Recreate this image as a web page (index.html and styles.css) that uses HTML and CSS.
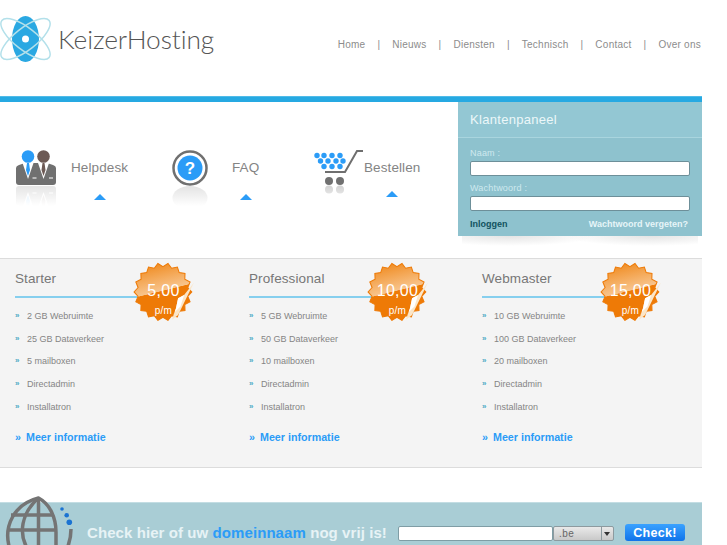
FILE: index.html
```html
<!DOCTYPE html>
<html lang="nl">
<head>
<meta charset="utf-8">
<title>KeizerHosting</title>
<link rel="stylesheet" href="styles.css">
</head>
<body>
<svg class="defs" width="0" height="0" aria-hidden="true">
  <defs>
    <linearGradient id="shine" x1="0.35" y1="0" x2="0.6" y2="1">
      <stop offset="0" stop-color="#f08c22"/>
      <stop offset="0.48" stop-color="#f8c48c"/>
      <stop offset="0.49" stop-color="#ee7a06"/>
      <stop offset="1" stop-color="#ee7a06"/>
    </linearGradient>
    <linearGradient id="fade" x1="0" y1="0" x2="0" y2="1">
      <stop offset="0" stop-color="#fff" stop-opacity="0.2"/>
      <stop offset="1" stop-color="#fff" stop-opacity="1"/>
    </linearGradient>
    <symbol id="burst" viewBox="0 0 64 64">
      <polygon fill="url(#shine)" stroke="#ee7a06" stroke-width="1" points="58,30 54.1,34.3 56.3,39.6 51.2,42.25 51.4,48 45.75,48.8 44,54.2 38.4,53 34.9,57.6 30,54.5 25.1,57.6 21.6,53 16,54.2 14.25,48.8 8.6,48 8.8,42.25 3.7,39.6 5.9,34.3 2,30 5.9,25.7 3.7,20.4 8.8,17.75 8.6,12 14.25,11.2 16,5.8 21.6,7 25.1,2.4 30,5.5 34.9,2.4 38.4,7 44,5.8 45.75,11.2 51.4,12 51.2,17.75 56.3,20.4 54.1,25.7"/>
      <polygon fill="#fbe6c8" points="60,21 44.7,52.4 38.8,57 42.7,45.6 44.7,36 50.5,33"/>
      <polygon fill="#fff" points="50.500,33 44.7,36 42.7,45.6 38.8,57 41,50 47,44"/>
    </symbol>
    <g id="suits">
      <path d="M0 18 q0-2 3-3 l6-2 h22 l6 2 q3 1 3 3 v14 q0 3-3 3 h-34 q-3 0-3-3z" fill="#707070"/>
      <path d="M6.500 13 l5.500 16 l5.500-16z" fill="#fff"/>
      <path d="M22 13 l5.500 16 l5.500-16z" fill="#fff"/>
      <path d="M11 13 h2 l1 7 l-2 6 l-2-6z" fill="#2b9cf7"/>
      <path d="M26.500 13 h2 l1 7 l-2 6 l-2-6z" fill="#6d5a55"/>
      <circle cx="12" cy="6.500" r="6.300" fill="#2b9cf7"/>
      <circle cx="27.500" cy="6.500" r="6.300" fill="#6d5a55"/>
      <rect x="16.500" y="27.500" width="4" height="1" fill="#fff"/>
      <rect x="33" y="27.500" width="4" height="1" fill="#fff"/>
    </g>
  </defs>
</svg>
<div class="page">
  <header class="header">
    <a class="logo" href="#">
      <svg class="logo-mark" width="52" height="62" viewBox="0 0 52 62">
        <ellipse cx="25.500" cy="23" rx="13.500" ry="23" fill="#2aa8e2"/>
        <ellipse cx="25.500" cy="23" rx="30" ry="11" fill="none" stroke="#b3e0ea" stroke-width="1.500" transform="rotate(38 25.500 23)"/>
        <ellipse cx="25.500" cy="23" rx="30" ry="11" fill="none" stroke="#b3e0ea" stroke-width="1.500" transform="rotate(-38 25.500 23)"/>
        <circle cx="25.500" cy="23" r="3.500" fill="#fff"/>
      </svg>
      <span class="logo-text">KeizerHosting</span>
    </a>
    <nav class="nav">
      <a href="#">Home</a><span>|</span><a href="#">Nieuws</a><span>|</span><a href="#">Diensten</a><span>|</span><a href="#">Technisch</a><span>|</span><a href="#">Contact</a><span>|</span><a href="#">Over ons</a>
    </nav>
  </header>
  <div class="bar"></div>
  <section class="mid">
    <div class="links">
      <a class="link link-help" href="#">
        <svg class="icon" width="42" height="56" viewBox="0 0 42 56">
          <use href="#suits"/>
          <use href="#suits" transform="translate(0 71) scale(1 -1)" opacity="0.22"/>
          <rect x="0" y="36" width="42" height="20" fill="url(#fade)"/>
        </svg>
        <span class="link-col"><span class="link-label">Helpdesk</span><span class="arrow"></span></span>
      </a>
      <a class="link link-faq" href="#">
        <svg class="icon" width="36" height="56" viewBox="0 0 36 56">
          <circle cx="18" cy="18" r="16.500" fill="#fff" stroke="#707070" stroke-width="2.500"/>
          <circle cx="18" cy="18" r="12.500" fill="#2b9cf7"/>
          <text x="18" y="23.500" class="qmark">?</text>
          <ellipse cx="18" cy="48" rx="17.500" ry="12" fill="#dcdcdc"/>
          <rect x="0" y="36" width="36" height="20" fill="url(#fade)"/>
        </svg>
        <span class="link-col"><span class="link-label">FAQ</span><span class="arrow"></span></span>
      </a>
      <a class="link link-cart" href="#">
        <svg class="icon" width="50" height="56" viewBox="0 0 50 56" fill="#2b9cf7">
          <circle cx="3" cy="5.500" r="2.700"/><circle cx="10" cy="5.500" r="2.700"/><circle cx="18" cy="5.500" r="2.700"/><circle cx="26" cy="5.500" r="2.700"/>
          <circle cx="6.500" cy="11" r="2.700"/><circle cx="14" cy="11" r="2.700"/><circle cx="22" cy="11" r="2.700"/><circle cx="29" cy="11" r="2.700"/>
          <circle cx="10" cy="16.500" r="2.700"/><circle cx="18" cy="16.500" r="2.700"/><circle cx="26" cy="16.500" r="2.700"/>
          <path d="M11 22 h20 l12-21 h6" fill="none" stroke="#6f6f6f" stroke-width="2"/>
          <circle cx="15" cy="31" r="4" fill="#707070"/><circle cx="26" cy="31" r="4" fill="#707070"/>
          <circle cx="15" cy="39.500" r="4" fill="#c8c8c8"/><circle cx="26" cy="39.500" r="4" fill="#c8c8c8"/>
          <rect x="0" y="36" width="50" height="20" fill="url(#fade)"/>
        </svg>
        <span class="link-col"><span class="link-label">Bestellen</span><span class="arrow"></span></span>
      </a>
    </div>
    <form class="panel">
      <h2 class="panel-title">Klantenpaneel</h2>
      <div class="panel-body">
        <label class="field-label" for="naam">Naam :</label>
        <input class="field" id="naam" type="text">
        <label class="field-label" for="pass">Wachtwoord :</label>
        <input class="field" id="pass" type="password">
        <div class="panel-links">
          <a class="login" href="#">Inloggen</a>
          <a class="forgot" href="#">Wachtwoord vergeten?</a>
        </div>
      </div>
    </form>
  </section>
  <section class="plans">
    <article class="plan">
      <h3 class="plan-title">Starter</h3>
      <div class="badge"><svg width="66" height="66"><use href="#burst"/></svg><span class="price">5,00</span><span class="pm">p/m</span></div>
      <ul class="features"><li>2 GB Webruimte</li><li>25 GB Dataverkeer</li><li>5 mailboxen</li><li>Directadmin</li><li>Installatron</li></ul>
      <a class="more" href="#">Meer informatie</a>
    </article>
    <article class="plan">
      <h3 class="plan-title">Professional</h3>
      <div class="badge"><svg width="66" height="66"><use href="#burst"/></svg><span class="price">10,00</span><span class="pm">p/m</span></div>
      <ul class="features"><li>5 GB Webruimte</li><li>50 GB Dataverkeer</li><li>10 mailboxen</li><li>Directadmin</li><li>Installatron</li></ul>
      <a class="more" href="#">Meer informatie</a>
    </article>
    <article class="plan">
      <h3 class="plan-title">Webmaster</h3>
      <div class="badge"><svg width="66" height="66"><use href="#burst"/></svg><span class="price">15,00</span><span class="pm">p/m</span></div>
      <ul class="features"><li>10 GB Webruimte</li><li>100 GB Dataverkeer</li><li>20 mailboxen</li><li>Directadmin</li><li>Installatron</li></ul>
      <a class="more" href="#">Meer informatie</a>
    </article>
  </section>
  <footer class="domain">
    <svg class="globe" width="76" height="50" viewBox="0 0 76 50">
      <g fill="none" stroke="#747474" stroke-width="3.500">
        <path d="M9 50 C4 30 14 8 38.500 2 C50 8 56 22 56 36 V50"/>
        <path d="M38.500 2 C20 18 20 38 26 50"/>
        <path d="M38.500 2v48M11 19h41M7 34h49"/>
        <path d="M71 33 Q71 42 68 50"/>
      </g>
      <circle cx="62" cy="13" r="1.800" fill="#1a73d2"/><circle cx="66.700" cy="19.300" r="2.300" fill="#1a73d2"/><circle cx="69.300" cy="26.300" r="2.800" fill="#1a73d2"/>
    </svg>
    <p class="domain-text">Check hier of uw <em>domeinnaam</em> nog vrij is!</p>
    <input class="domain-input" type="text">
    <span class="tld"><span class="tld-name">.be</span><span class="tld-btn"></span></span>
    <button class="check" type="button">Check!</button>
  </footer>
</div>
</body>
</html>
```
FILE: styles.css
```css
* { box-sizing: border-box; }
html, body { margin: 0; padding: 0; background: #fff; height: 545px; overflow: hidden; }
body { font-family: "Liberation Sans", Arial, sans-serif; color: #777; }
a { text-decoration: none; color: inherit; }
.defs { position: absolute; }
.page { width: 702px; }

.header { height: 96px; display: flex; align-items: flex-start; justify-content: space-between; }
.logo { display: flex; align-items: flex-start; margin-top: 16px; }
.logo-mark { flex: none; }
.logo-text { font-family: Lato, sans-serif; font-weight: 300; font-size: 26.300px; line-height: 30px; color: #555; margin: 8px 0 0 6px; letter-spacing: -0.100px; }
.nav { display: flex; gap: 12px; margin: 39px 1px 0 0; font-size: 10px; line-height: 12px; letter-spacing: 0.250px; color: #8c8c8c; }

.bar { height: 6px; background: #26a9e2; border-top: 1px solid #50bbe8; }

.mid { height: 156px; display: flex; justify-content: space-between; align-items: flex-start; }
.links { display: flex; padding: 48px 0 0 16px; }
.link { display: flex; align-items: flex-start; }
.link-help { width: 156px; }
.link-faq { width: 142px; }
.icon { flex: none; }
.link-col { display: flex; flex-direction: column; align-items: center; }
.link-label { font-size: 13.500px; line-height: 16px; letter-spacing: 0.100px; color: #848484; margin-top: 10px; }
.arrow { width: 0; height: 0; margin-top: 18px; border-left: 6px solid transparent; border-right: 6px solid transparent; border-bottom: 6px solid #2b9cf7; }
.link-help .link-col { margin-left: 13px; }
.link-faq .link-col { margin-left: 24px; }
.link-cart .link-col { margin-left: 0; }
.link-cart .arrow { margin-top: 15px; }
.qmark { font-size: 17px; font-weight: 700; fill: #fff; text-anchor: middle; }

.panel { position: relative; width: 244px; height: 134px; background: #8ec2ce; color: #fff; }
.panel::after { content: ""; position: absolute; left: 4px; right: 4px; top: 100%; height: 10px; background: radial-gradient(ellipse 36% 100% at 20% 0, #e4e4e4, transparent), radial-gradient(ellipse 36% 100% at 80% 0, #e4e4e4, transparent); }
.panel-title { margin: 0; height: 36px; padding: 10px 12px 0; font-size: 13px; line-height: 16px; font-weight: 400; letter-spacing: 0.300px; color: #ecf7f9; background: #93c7d3; border-bottom: 1px solid #a9d5de; }
.panel-body { padding: 9px 12px 0; display: flex; flex-direction: column; }
.field-label { font-size: 9px; line-height: 12px; letter-spacing: 0.200px; color: #cfe9ee; }
.field { display: block; width: 220px; height: 15px; margin: 2px 0 6px; padding: 0; background: #fff; border: 1px solid #6d8f99; border-radius: 2px; }
.panel-links { display: flex; justify-content: space-between; font-size: 9px; line-height: 12px; font-weight: 700; margin-top: 1px; padding-right: 2px; }
.login { color: #11525f; }
.forgot { color: #e6f5f8; }

.plans { height: 210px; display: grid; grid-template-columns: 234px 233px 1fr; background: #f4f4f4; border-top: 1px solid #dcdcdc; border-bottom: 1px solid #dcdcdc; padding-left: 15px; }
.plan { position: relative; }
.plan-title { margin: 12px 0 0; width: 125px; height: 27px; font-size: 13.500px; line-height: 16px; font-weight: 400; letter-spacing: 0.100px; color: #777; border-bottom: 2px solid #86cfee; }
.badge { position: absolute; left: 117px; top: 2px; width: 66px; height: 66px; color: #fff; text-align: center; }
.badge svg { display: block; }
.price { position: absolute; left: 0; width: 63px; top: 21px; font-size: 16px; line-height: 18px; letter-spacing: 0.300px; }
.pm { position: absolute; left: 0; width: 63px; top: 44px; font-size: 10px; line-height: 12px; letter-spacing: 0.200px; }
.features { list-style: none; margin: 7px 0 0; padding: 0; font-size: 9px; line-height: 22.700px; color: #858585; }
.features li { padding-left: 12px; position: relative; }
.features li::before { content: "»"; position: absolute; left: 0; font-size: 8px; color: #4aa9c4; font-weight: 700; }
.more { display: block; position: relative; margin: 11px 0 0; padding-left: 11px; font-size: 10.700px; line-height: 14px; font-weight: 700; color: #2b9cf7; }
.more::before { content: "»"; position: absolute; left: 0; }

.domain { position: relative; height: 43px; margin-top: 34px; background: #a9cdd5; border-top: 1px solid #c3dde3; display: flex; align-items: flex-start; padding: 20px 0 0 87px; }
.globe { position: absolute; left: 0; top: -7px; }
.domain-text { margin: 0; width: 311px; white-space: nowrap; font-size: 15px; line-height: 19px; font-weight: 700; letter-spacing: 0.080px; color: #e7f3f5; }
.domain-text em { font-style: normal; color: #2b9cf7; }
.domain-input { width: 155px; height: 15px; margin-top: 3px; padding: 0; background: #fff; border: 1px solid #7f9da5; border-radius: 2px; }
.tld { width: 61px; height: 15px; margin-top: 3px; display: flex; justify-content: space-between; border: 1px solid #8d9a9f; border-radius: 2px; background: linear-gradient(#e9e9e9, #c9c9c9); font-size: 10px; line-height: 14px; letter-spacing: 0.500px; color: #666; }
.tld-name { padding-left: 5px; }
.tld-btn { position: relative; width: 12px; border-left: 1px solid #8d9a9f; }
.tld-btn::after { content: ""; position: absolute; left: 2px; top: 5px; border-left: 3px solid transparent; border-right: 3px solid transparent; border-top: 4px solid #333; }
.check { width: 60px; height: 17px; margin: 1px 0 0 11px; padding: 0; border: 0; border-radius: 3px; background: linear-gradient(#3aa2ff, #0f73ea); color: #fff; font: 700 12.500px/16px "Liberation Sans", Arial, sans-serif; letter-spacing: 0.300px; }
```
